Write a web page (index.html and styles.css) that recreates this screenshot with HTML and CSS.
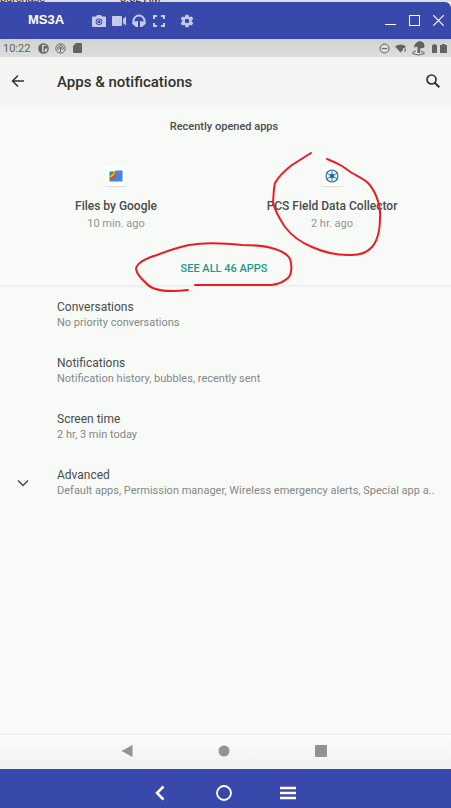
FILE: index.html
```
<!DOCTYPE html>
<html lang="en">
<head>
  <meta charset="UTF-8">
  <meta name="viewport" content="width=device-width, initial-scale=1.0">
  <title>MS3A</title>
  <link rel="stylesheet" href="styles.css">
</head>
<body>
  <div class="backdrop"><span>purchase</span><span>8:32 AM</span></div>

  <header class="titlebar">
    <h1>MS3A</h1>
    <div class="tools">
      <button aria-label="Screenshot"><svg width="14" height="14" viewBox="0 0 14 14"><path fill="currentColor" fill-rule="evenodd" d="M1 2.500h3l1-1.500h4l1 1.500h3q1 0 1 1v8.500q0 1-1 1H1q-1 0-1-1V3.500q0-1 1-1zM7 4.500a3.300 3.300 0 1 0 0 6.600a3.300 3.300 0 1 0 0-6.600z"/><circle cx="7" cy="7.800" r="2" fill="none" stroke="currentColor"/></svg></button>
      <button aria-label="Record"><svg width="14" height="14" viewBox="0 0 14 14"><path fill="currentColor" d="M0 3q0-1 1-1h8q1 0 1 1v8q0 1-1 1H1q-1 0-1-1zM11 5l3-2.500v9L11 9z"/></svg></button>
      <button aria-label="Audio"><svg width="14" height="14" viewBox="0 0 14 14"><path fill="none" stroke="currentColor" stroke-width="2" d="M1.500 10V7a5.500 5.500 0 0 1 11 0v3"/><path fill="currentColor" d="M.5 7.500H4l1-.5h1v6H4L.5 10zM13.500 7.500H10L9 7H8v6h2l3.500-3z"/></svg></button>
      <button aria-label="Full screen"><svg width="14" height="14" viewBox="0 0 14 14"><path fill="none" stroke="currentColor" stroke-width="2" d="M2 5V2h3M9 2h3v3M12 9v3H9M5 12H2V9"/></svg></button>
      <button class="settings" aria-label="Settings"><svg width="14" height="14" viewBox="1 1 22 22"><path fill="currentColor" d="M19.400 13a7.500 7.500 0 0 0 0-2l2.200-1.700c.2-.2.300-.5.100-.7l-2-3.500a.5.500 0 0 0-.7-.2l-2.500 1a7.700 7.700 0 0 0-1.700-1L14.400 2.300A.5.500 0 0 0 14 2h-4a.5.500 0 0 0-.5.400l-.4 2.600a8 8 0 0 0-1.600 1L5 5a.5.500 0 0 0-.7.200l-2 3.500c-.1.200 0 .5.200.6L4.600 11a8 8 0 0 0 0 2l-2.100 1.700c-.2.200-.3.400-.2.600l2 3.500c.2.200.4.300.7.200l2.500-1a7.700 7.700 0 0 0 1.700 1l.4 2.600c0 .3.200.4.500.4h4c.200 0 .4-.2.500-.4l.4-2.600a8 8 0 0 0 1.600-1l2.500 1c.3.100.5 0 .7-.2l2-3.500c.1-.2 0-.5-.2-.6zM12 15.500a3.500 3.500 0 1 1 0-7 3.500 3.500 0 0 1 0 7z"/></svg></button>
    </div>
    <div class="window-controls">
      <button aria-label="Minimize"><svg width="11" height="11" viewBox="0 0 11 11"><path stroke="currentColor" d="M0 9.500h11"/></svg></button>
      <button aria-label="Maximize"><svg width="11" height="11" viewBox="0 0 11 11"><rect x=".5" y=".5" width="10" height="10" fill="none" stroke="currentColor"/></svg></button>
      <button aria-label="Close"><svg width="11" height="11" viewBox="0 0 11 11"><path stroke="currentColor" stroke-width="1.200" d="M.3.300l10.400 10.400M10.700.300L.3 10.700"/></svg></button>
    </div>
  </header>

  <div class="statusbar">
    <span class="clock">10:22</span>
    <svg width="11" height="11" viewBox="0 0 11 11"><circle cx="5.500" cy="5.500" r="4.600" fill="none" stroke="currentColor" stroke-width="1.500"/><path fill="currentColor" d="M1 3l3-2.500V9.500L1.500 8zM5.500 3h2.500q1 0 1 1.300T8 5.700H6.700V9H5.500z"/></svg>
    <svg width="11" height="11" viewBox="0 0 11 11"><circle cx="5.500" cy="5.500" r="4.700" fill="none" stroke="currentColor" stroke-width="1"/><path fill="none" stroke="currentColor" d="M3.500 7a2.700 2.700 0 1 1 4 0M5.500 5v4.500"/><circle cx="5.500" cy="5" r="1.200" fill="currentColor"/></svg>
    <svg class="sd-card" width="9" height="10" viewBox="0 0 9 10"><path fill="currentColor" d="M3 0h5q1 0 1 1v8q0 1-1 1H1q-1 0-1-1V3z"/></svg>
    <div class="signals">
      <svg width="11" height="11" viewBox="0 0 11 11"><circle cx="5.500" cy="5.500" r="4.500" fill="none" stroke="currentColor"/><path stroke="currentColor" d="M3 5.500h5"/></svg>
      <svg width="12" height="11" viewBox="0 0 12 11"><path fill="currentColor" d="M0 3.500q5.500-4 11 0L9.500 5H8v2L5.500 9.500z"/><path fill="none" stroke="currentColor" d="M9 6q2-.5 1.500 1.200L9.700 8v1"/></svg>
      <svg width="13" height="15" viewBox="0 0 13 15"><path fill="currentColor" d="M2 6q1-5 6-6 5 1 4.500 6-2 2-4 1l-.5 5H5.500V6Q4 5 2 7z"/><path fill="none" stroke="currentColor" d="M4 10q-3 0-3.500 2.500 6 3 12 0Q12 10.500 9 10.500"/></svg>
      <div class="batteries">
        <svg width="5" height="9" viewBox="0 0 5 9"><path fill="currentColor" d="M1.500 0h2v1H5v8H0V1h1.500z"/></svg>
        <svg width="7" height="9" viewBox="0 0 7 9"><path fill="currentColor" d="M2 0h3v1h2v8H0V1h2z"/></svg>
      </div>
    </div>
  </div>

  <div class="appbar">
    <button aria-label="Back"><svg width="14" height="14" viewBox="0 0 14 14"><path fill="none" stroke="currentColor" stroke-width="1.500" d="M13 7H2M7 1.500L1.500 7 7 12.500"/></svg></button>
    <h2>Apps &amp; notifications</h2>
    <button aria-label="Search"><svg width="14" height="14" viewBox="0 0 14 14"><circle cx="5.500" cy="5.500" r="4.500" fill="none" stroke="currentColor" stroke-width="1.700"/><path stroke="currentColor" stroke-width="2" d="M8.500 8.500L13.300 13.300"/></svg></button>
  </div>

  <main>
    <section class="recent">
      <h3>Recently opened apps</h3>
      <div class="apps">
        <div class="app">
          <span class="app-icon"><svg width="14" height="12" viewBox="0 0 14 12"><path fill="#4285e8" d="M6.500.5h7v11H.5V8z"/><path fill="#2a9d57" d="M.5 1.500H7v1L3 7H.5z"/><path fill="#e9b93a" d="M6 1.500h1v2L3 7.500H.5V6.500z"/><path fill="#d0503b" d="M7.500 1.500V5q-1 3-4 4h-3V7.500Q5 7 6.500 2z"/></svg></span>
          <strong>Files by Google</strong>
          <small>10 min. ago</small>
        </div>
        <div class="app">
          <span class="app-icon"><svg width="14" height="14" viewBox="0 0 14 14"><circle cx="7" cy="7" r="6" fill="#e9f3f8" stroke="#3d7089" stroke-width="1.200"/><path stroke="#3186bd" d="M7 1v12M1.500 4l11 6M1.500 10l11-6"/><circle cx="7" cy="7" r="2.300" fill="#176ca8"/></svg></span>
          <strong>PCS Field Data Collector</strong>
          <small>2 hr. ago</small>
          <svg class="mark mark-app" width="112" height="108" viewBox="0 0 112 108"><path d="M41 3L33 8L22 15Q10 24 5 33C3 41 4 43 3 52Q5 62 15 77Q25 90 42 97Q60 105 78 105Q94 106 102 97Q110 88 110 67C111 52 103 38 98 33C93 28 87 26 82 23L72 16Q65 12 57 9"/></svg>
        </div>
      </div>
      <div class="see-all">
        <button>SEE ALL 46 APPS</button>
        <svg class="mark mark-button" width="160" height="52" viewBox="0 0 160 52"><path d="M55 49Q22 53 13 42Q4 34 3 28Q4 20 24 14Q50 4 64 3Q82 1 109 4Q130 4 142 8Q154 12 157 18C159 24 159 32 156 36Q149 43 138 44H62"/></svg>
      </div>
    </section>

    <ul class="settings-list">
      <li><h4>Conversations</h4><p>No priority conversations</p></li>
      <li><h4>Notifications</h4><p>Notification history, bubbles, recently sent</p></li>
      <li><h4>Screen time</h4><p>2 hr, 3 min today</p></li>
      <li class="advanced">
        <svg width="12" height="8" viewBox="0 0 12 8"><path fill="none" stroke="currentColor" stroke-width="1.500" d="M1 1.500l5 5 5-5"/></svg>
        <div><h4>Advanced</h4><p>Default apps, Permission manager, Wireless emergency alerts, Special app a..</p></div>
      </li>
    </ul>
  </main>

  <nav class="android-nav">
    <button aria-label="Back"><svg width="12" height="12" viewBox="0 0 12 12"><path fill="currentColor" d="M11.500 0v12L.5 6z"/></svg></button>
    <button aria-label="Home"><svg width="12" height="12" viewBox="0 0 12 12"><circle cx="6" cy="6" r="5.500" fill="currentColor"/></svg></button>
    <button aria-label="Overview"><svg width="12" height="12" viewBox="0 0 12 12"><rect width="12" height="12" rx="1" fill="currentColor"/></svg></button>
  </nav>

  <footer class="control-bar">
    <button aria-label="Go back"><svg width="16" height="16" viewBox="0 0 16 16"><path fill="none" stroke="currentColor" stroke-width="2.500" d="M11.500 1.500L5 8l6.500 6.500"/></svg></button>
    <button aria-label="Go home"><svg width="16" height="16" viewBox="0 0 16 16"><circle cx="8" cy="8" r="7" fill="none" stroke="currentColor" stroke-width="1.800"/></svg></button>
    <button aria-label="Menu"><svg width="16" height="16" viewBox="0 0 16 16"><path stroke="currentColor" stroke-width="2.500" d="M0 3h16M0 8h16M0 13h16"/></svg></button>
  </footer>
</body>
</html>
```
FILE: styles.css
```
* {
  box-sizing: border-box;
}
body {
  display: flex;
  flex-direction: column;
  min-height: 100vh;
  margin: 0;
  font-family: Roboto, sans-serif;
  background: #f8faf8;
  color: #4a4c4a;
}
h1, h2, h3, h4, p, ul {
  margin: 0;
  padding: 0;
}
button {
  display: flex;
  padding: 0;
  border: none;
  background: none;
  color: inherit;
  font-family: inherit;
  cursor: pointer;
}
svg {
  display: block;
  flex: none;
}

/* sliver of the window behind, only the feet of its text show */
.backdrop {
  display: flex;
  align-items: flex-end;
  height: 2px;
  overflow: hidden;
  background: #dedee0;
  color: #222;
  font: 11px/8px "Liberation Sans", Arial, sans-serif;
}
.backdrop span {
  width: 120px;
}
.titlebar {
  display: flex;
  align-items: center;
  height: 37px;
  padding: 0 7px 0 28px;
  background: #3949ab;
  border-top-right-radius: 6px;
  color: #fff;
}
.titlebar h1 {
  width: 64px;
  padding-bottom: 2px;
  font: bold 13px/18px "Liberation Sans", Arial, sans-serif;
}
.tools {
  display: flex;
  gap: 6px;
  color: #c5cbe9;
}
.tools .settings {
  margin-left: 8px;
}
.window-controls {
  display: flex;
  gap: 13px;
  margin-left: auto;
}

.statusbar {
  display: flex;
  align-items: center;
  gap: 6px;
  height: 18px;
  padding: 0 4px 0 3px;
  background: linear-gradient(#d1d3d1, #dcdedc);
  color: #626462;
  font-size: 11px;
}
.clock {
  width: 29px;
}
.sd-card {
  margin-left: 1px;
}
.signals {
  display: flex;
  align-items: center;
  gap: 5px;
  margin-left: auto;
}
.batteries {
  display: flex;
  gap: 3px;
  margin-left: 2px;
}

.appbar {
  display: flex;
  align-items: center;
  height: 48px;
  padding: 0 11px;
  background: #f4f5f3;
  color: #303230;
}
.appbar h2 {
  flex: 1;
  padding: 2px 0 0 32px;
  font-size: 15px;
  font-weight: 500;
  line-height: 20px;
}

main {
  flex: 1;
}
.recent {
  padding: 13px 11px 7px 8px;
  border-bottom: 2px solid #eeefee;
  text-align: center;
}
.recent h3 {
  font-size: 11px;
  font-weight: 500;
  line-height: 18px;
}
.apps {
  display: grid;
  grid-template-columns: 1fr 1fr;
  padding-top: 30px;
}
.app {
  position: relative;
  display: flex;
  flex-direction: column;
  align-items: center;
}
.app-icon {
  display: grid;
  place-items: center;
  width: 20px;
  height: 20px;
  background: #fff;
  box-shadow: 0 1px 1px #dfe1df;
}
.app strong {
  margin-top: 11px;
  font-size: 12px;
  font-weight: 500;
  line-height: 18px;
}
.app small {
  font-size: 11px;
  line-height: 18px;
  color: #929492;
}
.see-all {
  position: relative;
  display: flex;
  justify-content: center;
  padding-top: 27px;
}
.see-all button {
  color: #26988a;
  font-size: 11px;
  font-weight: 500;
  line-height: 18px;
}

/* red pen strokes drawn over the screen */
.mark {
  position: absolute;
  fill: none;
  stroke: #ec1c24;
  stroke-width: 2;
  stroke-linecap: round;
  stroke-linejoin: round;
  pointer-events: none;
}
.mark-app {
  top: -16px;
  left: calc(50% - 62px);
}
.mark-button {
  top: 8px;
  left: calc(50% - 91px);
}

.settings-list {
  display: flex;
  flex-direction: column;
  gap: 24px;
  padding: 12px 11px 0 57px;
  list-style: none;
}
.settings-list h4 {
  font-size: 12px;
  font-weight: 400;
  line-height: 16px;
}
.settings-list p {
  font-size: 11px;
  line-height: 16px;
  color: #858785;
}
.advanced {
  display: flex;
  align-items: center;
  gap: 28px;
  margin-left: -40px;
}

.android-nav {
  display: flex;
  justify-content: center;
  align-items: center;
  gap: 85px;
  height: 36px;
  padding: 0 3px 2px 0;
  border-top: 2px solid #eeefee;
  background: linear-gradient(#fbfdfb, #f0f2f0);
  color: #929492;
}
.control-bar {
  display: flex;
  justify-content: center;
  align-items: center;
  gap: 48px;
  height: 39px;
  padding: 8px 3px 0 0;
  background: #3949ab;
  color: #fff;
}
```
